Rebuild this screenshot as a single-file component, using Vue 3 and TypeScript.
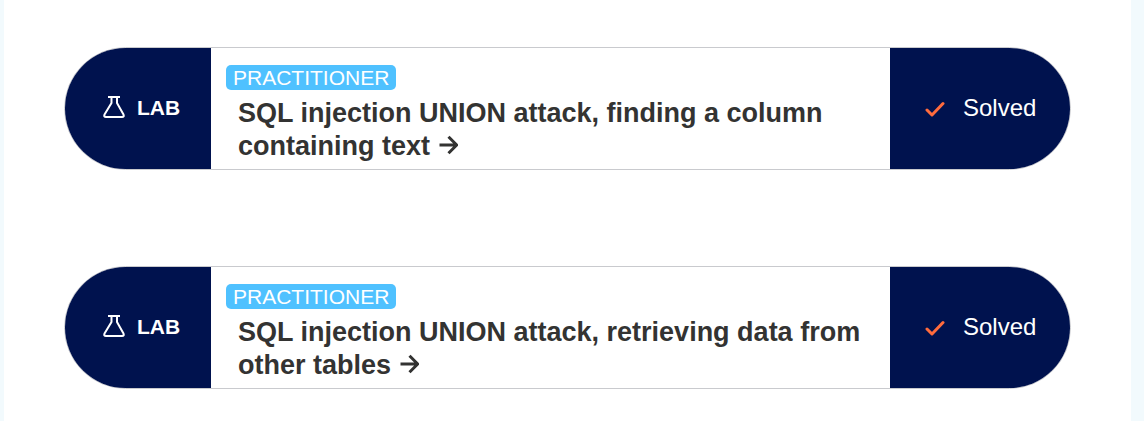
<script setup lang="ts">
interface Lab {
  id: number
  level: string
  title: string
  status: string
}

const labs: Lab[] = [
  { id: 1, level: 'PRACTITIONER', title: 'SQL injection UNION attack, finding a column containing text', status: 'Solved' },
  { id: 2, level: 'PRACTITIONER', title: 'SQL injection UNION attack, retrieving data from other tables', status: 'Solved' },
]
</script>

<template>
  <main class="page">
    <article v-for="lab in labs" :key="lab.id" class="lab">
      <div class="kind">
        <svg class="flask" viewBox="0 0 22 24" aria-hidden="true">
          <path d="M5 2H17M8.500 2V8L1.500 19.500Q0.600 22 3 22H19Q21.400 22 20.500 19.500L14 8V2" />
        </svg>
        <span>LAB</span>
      </div>
      <div class="body">
        <span class="level">{{ lab.level }}</span>
        <a class="title" href="#">{{ lab.title }}
          <svg class="arrow" viewBox="0 0 20 20" aria-hidden="true">
            <path d="M1.500 10H18M10.500 1.800L18.700 10L10.500 18.200" />
          </svg></a>
      </div>
      <div class="status">
        <svg class="check" viewBox="0 0 20 16" aria-hidden="true">
          <path d="M2 9L7 14L18 2.500" />
        </svg>
        <span class="status-text">{{ lab.status }}</span>
      </div>
    </article>
  </main>
</template>

<style>
body {
  margin: 0;
  background: #f2fafd;
}
</style>

<style scoped>
.page {
  box-sizing: border-box;
  min-height: 100vh;
  margin: 0 13px 0 4px;
  padding: 47px 60px 32px 60px;
  display: flex;
  flex-direction: column;
  gap: 96px;
  background: #fff;
  font-family: "Liberation Sans", Arial, sans-serif;
}

.lab {
  display: flex;
  overflow: hidden;
  border: 1px solid #c9cace;
  border-radius: 62px;
}

.kind,
.status {
  flex: none;
  box-sizing: border-box;
  display: flex;
  align-items: center;
  background: #00124e;
  color: #fff;
}

.kind {
  width: 146px;
  padding: 0 0 2px 38px;
  gap: 12px;
  font-size: 21px;
  font-weight: 700;
}

.flask {
  width: 22px;
  height: 24px;
  margin-bottom: 2px;
  fill: none;
  stroke: currentColor;
  stroke-width: 2;
  stroke-linejoin: round;
}

.body {
  flex: 1;
  min-width: 0;
  display: flex;
  flex-direction: column;
  align-items: flex-start;
  gap: 7px;
  padding: 17px 15px 6px;
}

.level {
  padding: 0 7px;
  border-radius: 5px;
  background: #4fc1ff;
  color: #fff;
  font-size: 21px;
  line-height: 25px;
}

.title {
  padding-left: 12px;
  color: #333332;
  font-size: 27px;
  font-weight: 700;
  line-height: 33px;
  text-decoration: none;
}

.arrow {
  width: 20px;
  height: 20px;
  vertical-align: 0;
  fill: none;
  stroke: currentColor;
  stroke-width: 3;
}

.status {
  width: 180px;
  padding-left: 35px;
  gap: 18px;
  font-size: 24px;
}

.status-text {
  padding-bottom: 2px;
}

.check {
  width: 20px;
  height: 16px;
  fill: none;
  stroke: #ff6b3d;
  stroke-width: 3;
  stroke-linecap: round;
  stroke-linejoin: round;
}
</style>
